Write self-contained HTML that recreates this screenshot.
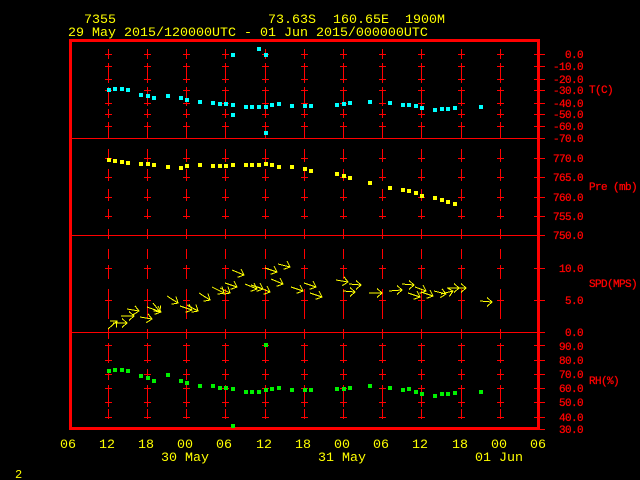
<!DOCTYPE html>
<html>
<head>
<meta charset="utf-8">
<style>
html,body{margin:0;padding:0;background:#000;width:640px;height:480px;overflow:hidden}
svg{display:block}
text{font-family:"Liberation Mono",monospace;white-space:pre}
.y{fill:#ff0;font-size:13.33px}
.r{fill:#f00;stroke:#f00;stroke-width:.3px;font-size:11px;letter-spacing:-.6px}
.e{text-anchor:end}
</style>
</head>
<body>
<svg width="640" height="480" viewBox="0 0 640 480" xmlns="http://www.w3.org/2000/svg" shape-rendering="crispEdges">
<defs>
<path id="col" fill="none" stroke="#f00" stroke-width="1" d="M.5 49V59M.5 63V83M.5 87V106M.5 109V118M.5 122V138M.5 149V162M.5 169V181M.5 189V201M.5 209V219M.5 229V239M.5 249V259M.5 265V279M.5 289V319M.5 329V339M.5 343V363M.5 369V380M.5 385V407M.5 409V419
M-3 54.5H4M-3 66.5H4M-3 79.5H4M-3 90.5H4M-3 103.5H4M-3 114.5H4M-3 126.5H4
M-3 158.5H4M-3 177.5H4M-3 197.5H4M-3 216.5H4M-3 268.5H4M-3 300.5H4
M-3 345.5H4M-3 360.5H4M-3 374.5H4M-3 388.5H4M-3 402.5H4M-3 417.5H4"/>
</defs>

<!-- grid columns -->
<g>
<use href="#col" x="108"/><use href="#col" x="147"/><use href="#col" x="186"/><use href="#col" x="225"/><use href="#col" x="265"/><use href="#col" x="304"/><use href="#col" x="343"/><use href="#col" x="382"/><use href="#col" x="421"/><use href="#col" x="461"/><use href="#col" x="500"/>
</g>

<!-- panel dividers -->
<path stroke="#f00" stroke-width="1" fill="none" d="M72 138.5H545M72 235.5H545M72 332.5H545"/>
<!-- right axis ticks -->
<path stroke="#f00" stroke-width="1" fill="none" d="M534 54.5H545M534 66.5H545M534 79.5H545M534 90.5H545M534 103.5H545M534 114.5H545M534 126.5H545M534 158.5H545M534 177.5H545M534 197.5H545M534 216.5H545M534 268.5H545M534 300.5H545M534 345.5H545M534 360.5H545M534 374.5H545M534 388.5H545M534 402.5H545M534 417.5H545M534 429.5H545"/>
<!-- frame -->
<g fill="#f00">
<rect x="69" y="39" width="471" height="3"/>
<rect x="69" y="427" width="471" height="3"/>
<rect x="69" y="39" width="3" height="391"/>
<rect x="537" y="39" width="3" height="391"/>
</g>

<!-- temperature -->
<path fill="#0ff" d="M107 88h4v4h-4zM113 87h4v4h-4zM120 87h4v4h-4zM126 88h4v4h-4zM139 93h4v4h-4zM146 94h4v4h-4zM152 96h4v4h-4zM166 94h4v4h-4zM179 96h4v4h-4zM185 98h4v4h-4zM198 100h4v4h-4zM211 101h4v4h-4zM218 102h4v4h-4zM224 102h4v4h-4zM231 103h4v4h-4zM231 113h4v4h-4zM231 53h4v4h-4zM257 47h4v4h-4zM264 53h4v4h-4zM244 105h4v4h-4zM250 105h4v4h-4zM257 105h4v4h-4zM264 105h4v4h-4zM270 103h4v4h-4zM277 102h4v4h-4zM290 104h4v4h-4zM303 104h4v4h-4zM309 104h4v4h-4zM264 131h4v4h-4zM335 103h4v4h-4zM342 102h4v4h-4zM348 101h4v4h-4zM368 100h4v4h-4zM388 101h4v4h-4zM401 103h4v4h-4zM407 103h4v4h-4zM414 104h4v4h-4zM420 106h4v4h-4zM433 108h4v4h-4zM440 107h4v4h-4zM446 107h4v4h-4zM453 106h4v4h-4zM479 105h4v4h-4z"/>
<!-- pressure -->
<path fill="#ff0" d="M107 158h4v4h-4zM113 159h4v4h-4zM120 160h4v4h-4zM126 161h4v4h-4zM139 162h4v4h-4zM146 162h4v4h-4zM152 163h4v4h-4zM166 165h4v4h-4zM179 166h4v4h-4zM185 164h4v4h-4zM198 163h4v4h-4zM211 164h4v4h-4zM218 164h4v4h-4zM224 164h4v4h-4zM231 163h4v4h-4zM244 163h4v4h-4zM250 163h4v4h-4zM257 163h4v4h-4zM264 162h4v4h-4zM270 163h4v4h-4zM277 165h4v4h-4zM290 165h4v4h-4zM303 167h4v4h-4zM309 169h4v4h-4zM335 172h4v4h-4zM342 174h4v4h-4zM348 176h4v4h-4zM368 181h4v4h-4zM388 186h4v4h-4zM401 188h4v4h-4zM407 189h4v4h-4zM414 191h4v4h-4zM420 194h4v4h-4zM433 196h4v4h-4zM440 198h4v4h-4zM446 200h4v4h-4zM453 202h4v4h-4z"/>
<!-- humidity -->
<path fill="#00f000" d="M107 369h4v4h-4zM113 368h4v4h-4zM120 368h4v4h-4zM126 369h4v4h-4zM139 374h4v4h-4zM146 376h4v4h-4zM152 379h4v4h-4zM166 373h4v4h-4zM179 379h4v4h-4zM185 381h4v4h-4zM198 384h4v4h-4zM211 384h4v4h-4zM218 386h4v4h-4zM224 386h4v4h-4zM231 387h4v4h-4zM231 424h4v4h-4zM244 390h4v4h-4zM250 390h4v4h-4zM257 390h4v4h-4zM264 388h4v4h-4zM264 343h4v4h-4zM270 387h4v4h-4zM277 386h4v4h-4zM290 388h4v4h-4zM303 388h4v4h-4zM309 388h4v4h-4zM335 387h4v4h-4zM342 387h4v4h-4zM348 386h4v4h-4zM368 384h4v4h-4zM388 386h4v4h-4zM401 388h4v4h-4zM407 387h4v4h-4zM414 390h4v4h-4zM420 392h4v4h-4zM433 394h4v4h-4zM440 392h4v4h-4zM446 392h4v4h-4zM453 391h4v4h-4zM479 390h4v4h-4z"/>

<!-- wind arrows -->
<g fill="none" stroke="#ff0" stroke-width="1">
<path d="M108 329L117 321m-.75 6.7l.75 -6.7l-6.75 -.1"/>
<path d="M113 323L127 323m-5 -4.5l5 4.5l-5 4.5"/>
<path d="M121 316L134 316m-5 -4.5l5 4.5l-5 4.5"/>
<path d="M127 309L139 311m-5.7 3.6l5.7 -3.6l-4.1 -5.3"/>
<path d="M140 317L152 319m-5.7 3.6l5.7 -3.6l-4.1 -5.3"/>
<path d="M147 307L161 312m-6.3 2.3l6.3 -2.3l-3 -6"/>
<path d="M153 303L160 312m-6.6 -1.2l6.6 1.2l.5 -6.7"/>
<path d="M167 296L178 303m-6.6 1.3l6.6 -1.3l-2 -6.4"/>
<path d="M180 306L192 310m-6.3 2.3l6.3 -2.3l-3 -6"/>
<path d="M187 305L198 311m-6.6 1.3l6.6 -1.3l-2 -6.4"/>
<path d="M199 293L210 300m-6.6 1.3l6.6 -1.3l-2 -6.4"/>
<path d="M212 287L224 293m-6.6 1.3l6.6 -1.3l-2 -6.4"/>
<path d="M220 288L230 293m-6.6 1.3l6.6 -1.3l-2 -6.4"/>
<path d="M225 283L237 287m-6.3 2.3l6.3 -2.3l-3 -6"/>
<path d="M232 270L244 275m-6.3 2.3l6.3 -2.3l-3 -6"/>
<path d="M245 284L257 289m-6.3 2.3l6.3 -2.3l-3 -6"/>
<path d="M251 285L263 289m-6.3 2.3l6.3 -2.3l-3 -6"/>
<path d="M258 287L270 292m-6.3 2.3l6.3 -2.3l-3 -6"/>
<path d="M265 268L277 272m-6.3 2.3l6.3 -2.3l-3 -6"/>
<path d="M278 264L290 267m-6.3 2.3l6.3 -2.3l-3 -6"/>
<path d="M271 279L283 284m-6.3 2.3l6.3 -2.3l-3 -6"/>
<path d="M291 287L303 291m-6.3 2.3l6.3 -2.3l-3 -6"/>
<path d="M304 283L316 287m-6.3 2.3l6.3 -2.3l-3 -6"/>
<path d="M310 293L322 297m-6.3 2.3l6.3 -2.3l-3 -6"/>
<path d="M336 280L348 282m-5.7 3.6l5.7 -3.6l-4.1 -5.3"/>
<path d="M349 284L361 285m-5 -4.5l5 4.5l-5 4.5"/>
<path d="M343 291L355 292m-5 -4.5l5 4.5l-5 4.5"/>
<path d="M369 293L382 293m-5 -4.5l5 4.5l-5 4.5"/>
<path d="M389 291L402 290m-5 -4.5l5 4.5l-5 4.5"/>
<path d="M402 284L414 285m-5 -4.5l5 4.5l-5 4.5"/>
<path d="M408 293L420 297m-6.3 2.3l6.3 -2.3l-3 -6"/>
<path d="M415 287L426 291m-6.3 2.3l6.3 -2.3l-3 -6"/>
<path d="M421 292L433 296m-6.3 2.3l6.3 -2.3l-3 -6"/>
<path d="M434 291L446 294m-5.7 3.6l5.7 -3.6l-4.1 -5.3"/>
<path d="M441 294L453 291m-3.75 5.6l3.75 -5.6l-5.95 -3.2"/>
<path d="M447 288L459 288m-5 -4.5l5 4.5l-5 4.5"/>
<path d="M454 288L466 288m-5 -4.5l5 4.5l-5 4.5"/>
<path d="M480 301L492 302m-5 -4.5l5 4.5l-5 4.5"/>
</g>

<!-- header -->
<text class="y" x="84" y="23">7355</text>
<text class="y" x="268" y="23">73.63S</text>
<text class="y" x="333" y="23">160.65E</text>
<text class="y" x="405" y="23">1900M</text>
<text class="y" x="68" y="36">29 May 2015/120000UTC - 01 Jun 2015/000000UTC</text>

<!-- right axis labels -->
<g>
<text class="r e" x="583" y="58">0.0</text>
<text class="r e" x="583" y="70">-10.0</text>
<text class="r e" x="583" y="83">-20.0</text>
<text class="r e" x="583" y="94">-30.0</text>
<text class="r e" x="583" y="107">-40.0</text>
<text class="r e" x="583" y="118">-50.0</text>
<text class="r e" x="583" y="130">-60.0</text>
<text class="r e" x="583" y="142">-70.0</text>
<text class="r e" x="583" y="162">770.0</text>
<text class="r e" x="583" y="181">765.0</text>
<text class="r e" x="583" y="201">760.0</text>
<text class="r e" x="583" y="220">755.0</text>
<text class="r e" x="583" y="239">750.0</text>
<text class="r e" x="583" y="272">10.0</text>
<text class="r e" x="583" y="304">5.0</text>
<text class="r e" x="583" y="336">0.0</text>
<text class="r e" x="583" y="350">90.0</text>
<text class="r e" x="583" y="364">80.0</text>
<text class="r e" x="583" y="378">70.0</text>
<text class="r e" x="583" y="392">60.0</text>
<text class="r e" x="583" y="406">50.0</text>
<text class="r e" x="583" y="421">40.0</text>
<text class="r e" x="583" y="433">30.0</text>
<text class="r" x="589" y="93">T(C)</text>
<text class="r" x="589" y="190">Pre (mb)</text>
<text class="r" x="589" y="287">SPD(MPS)</text>
<text class="r" x="589" y="384">RH(%)</text>
</g>

<!-- time axis -->
<g>
<text class="y" x="60" y="448">06</text>
<text class="y" x="99" y="448">12</text>
<text class="y" x="138" y="448">18</text>
<text class="y" x="177" y="448">00</text>
<text class="y" x="216" y="448">06</text>
<text class="y" x="256" y="448">12</text>
<text class="y" x="295" y="448">18</text>
<text class="y" x="334" y="448">00</text>
<text class="y" x="373" y="448">06</text>
<text class="y" x="412" y="448">12</text>
<text class="y" x="452" y="448">18</text>
<text class="y" x="491" y="448">00</text>
<text class="y" x="530" y="448">06</text>
<text class="y" x="161" y="461">30 May</text>
<text class="y" x="318" y="461">31 May</text>
<text class="y" x="475" y="461">01 Jun</text>
<text class="y" x="15" y="478" style="font-size:12px">2</text>
</g>
</svg>
</body>
</html>
